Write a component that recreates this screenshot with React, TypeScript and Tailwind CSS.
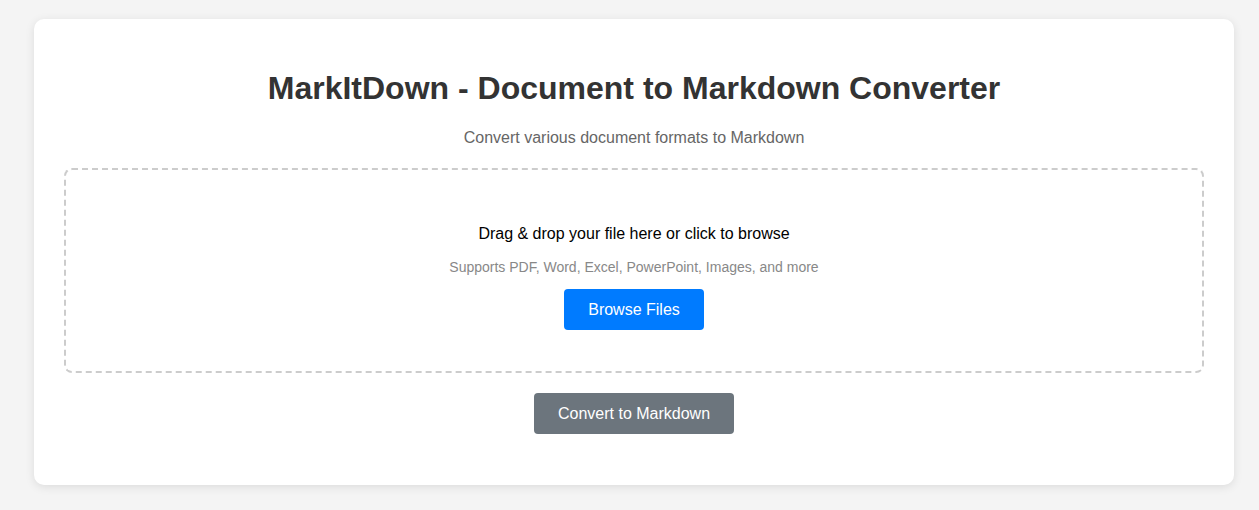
export default function App() {
  return (
    <div className="min-h-[510px] bg-[#f4f4f4] pl-[34px] pr-[25px] pt-[19px] pb-[25px] font-['Liberation_Sans',Arial,sans-serif]">
      <div className="bg-white rounded-[10px] shadow-[0_2px_10px_rgba(0,0,0,0.1)] px-[30px] pt-[30px] pb-[51px]">
        {/* Header */}
        <h1 className="mt-[21px] mb-[22px] text-center text-[32px] leading-[37px] font-bold text-[#333]">
          MarkItDown - Document to Markdown Converter
        </h1>
        <p className="text-center text-[16px] leading-[18px] text-[#666] mb-[21px]">
          Convert various document formats to Markdown
        </p>

        {/* Drop zone */}
        <div className="border-2 border-dashed border-[#ccc] rounded-[8px] px-5 pt-[55px] pb-[41px] flex flex-col items-center">
          <p className="text-[16px] leading-[18px] text-black">Drag &amp; drop your file here or click to browse</p>
          <p className="mt-[16px] text-[14px] leading-[16px] text-[#888]">
            Supports PDF, Word, Excel, PowerPoint, Images, and more
          </p>
          <button className="mt-[14px] h-[41px] px-6 rounded-[4px] bg-[#007bff] text-white text-[16px]">
            Browse Files
          </button>
        </div>

        {/* Convert */}
        <div className="flex justify-center mt-[20px]">
          <button className="h-[41px] px-6 rounded-[4px] bg-[#6c757d] text-white text-[16px]">
            Convert to Markdown
          </button>
        </div>
      </div>
    </div>
  );
}
